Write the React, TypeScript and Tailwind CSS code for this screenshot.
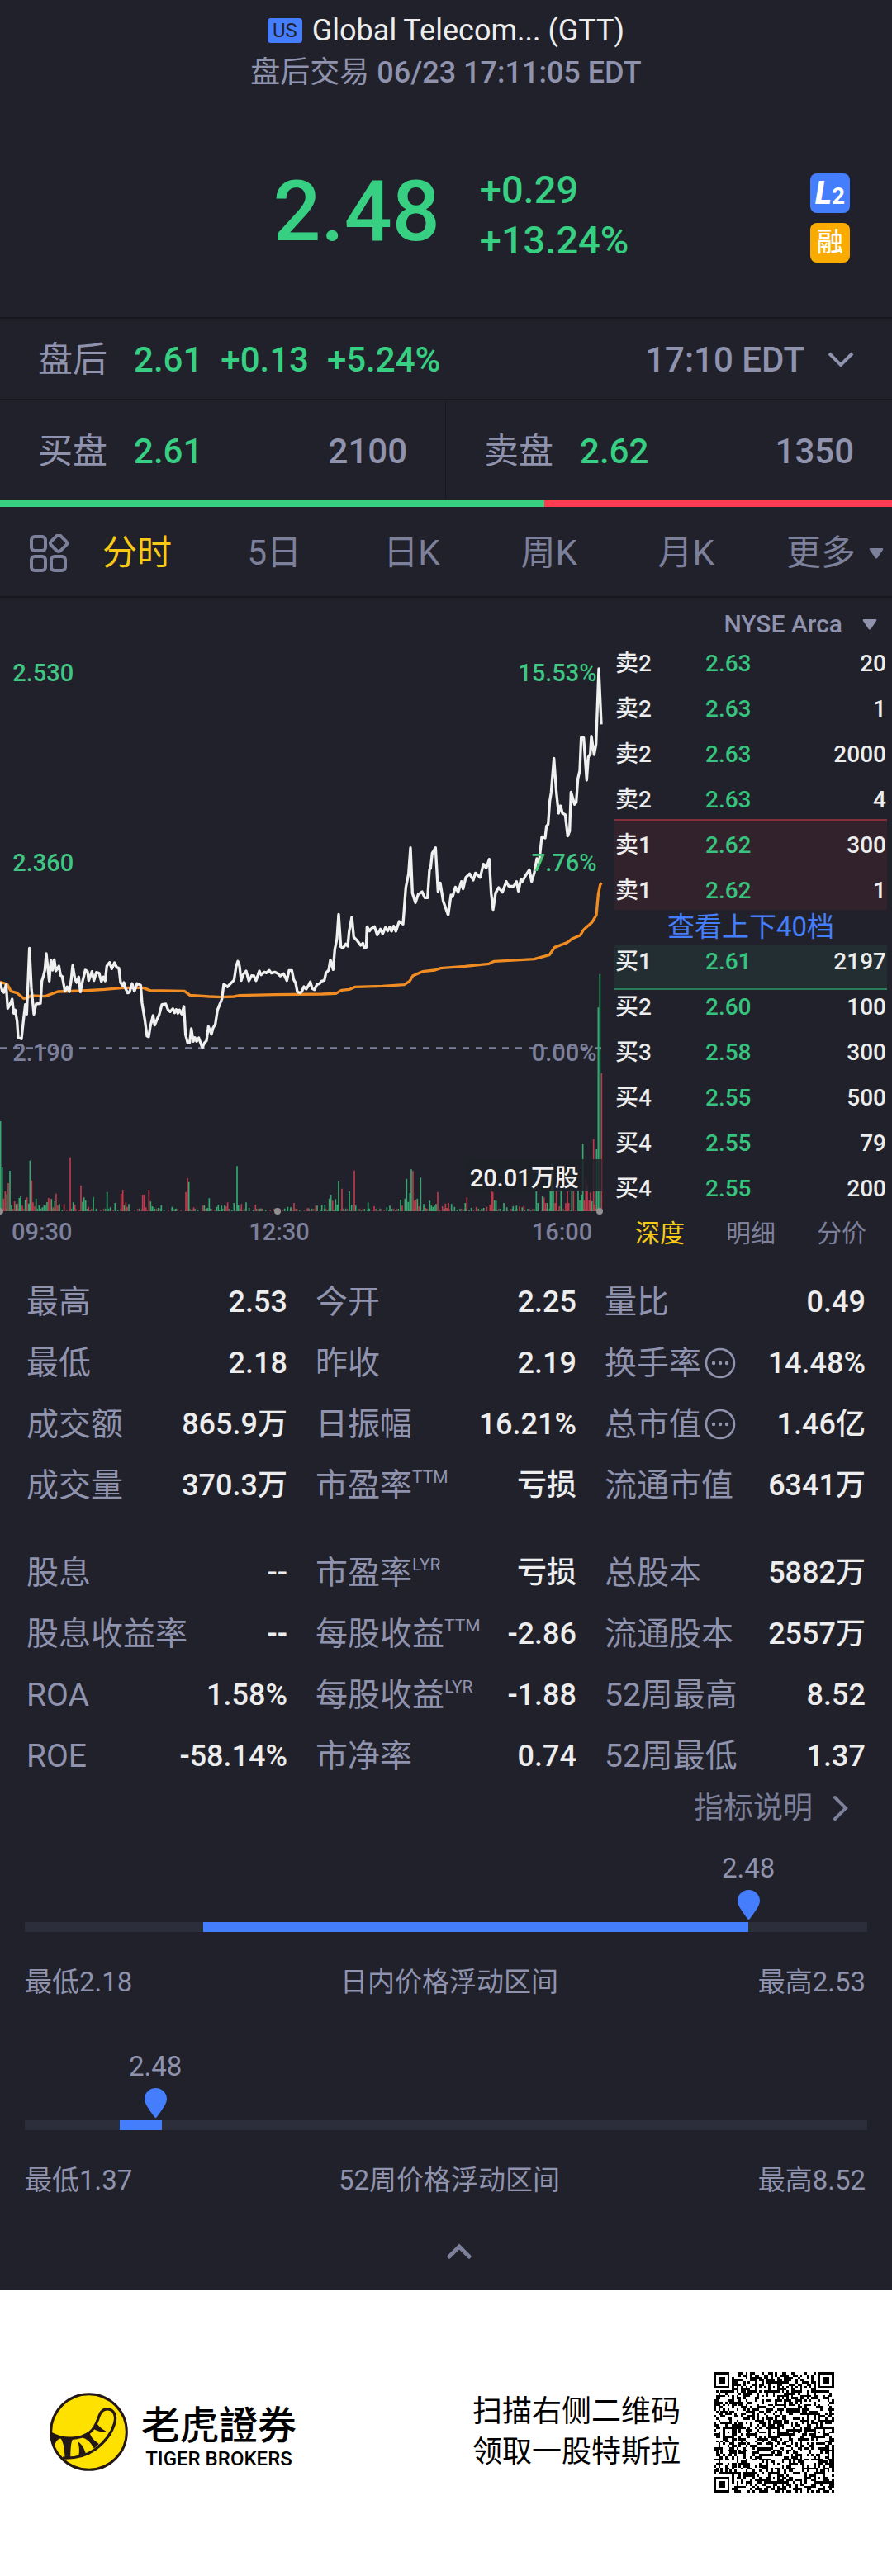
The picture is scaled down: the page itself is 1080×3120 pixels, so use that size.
import React, { useState } from "react";

interface Level {
  side: string;
  price: string;
  size: string;
}

interface Stat {
  label: string;
  value: string;
  sup?: string;
  info?: boolean;
}

const asks: Level[] = [
  { side: "卖2", price: "2.63", size: "20" },
  { side: "卖2", price: "2.63", size: "1" },
  { side: "卖2", price: "2.63", size: "2000" },
  { side: "卖2", price: "2.63", size: "4" },
  { side: "卖1", price: "2.62", size: "300" },
  { side: "卖1", price: "2.62", size: "1" },
];

const bids: Level[] = [
  { side: "买1", price: "2.61", size: "2197" },
  { side: "买2", price: "2.60", size: "100" },
  { side: "买3", price: "2.58", size: "300" },
  { side: "买4", price: "2.55", size: "500" },
  { side: "买4", price: "2.55", size: "79" },
  { side: "买4", price: "2.55", size: "200" },
];

const quoteStats: Stat[] = [
  { label: "最高", value: "2.53" },
  { label: "今开", value: "2.25" },
  { label: "量比", value: "0.49" },
  { label: "最低", value: "2.18" },
  { label: "昨收", value: "2.19" },
  { label: "换手率", value: "14.48%", info: true },
  { label: "成交额", value: "865.9万" },
  { label: "日振幅", value: "16.21%" },
  { label: "总市值", value: "1.46亿", info: true },
  { label: "成交量", value: "370.3万" },
  { label: "市盈率", value: "亏损", sup: "TTM" },
  { label: "流通市值", value: "6341万" },
];

const companyStats: Stat[] = [
  { label: "股息", value: "--" },
  { label: "市盈率", value: "亏损", sup: "LYR" },
  { label: "总股本", value: "5882万" },
  { label: "股息收益率", value: "--" },
  { label: "每股收益", value: "-2.86", sup: "TTM" },
  { label: "流通股本", value: "2557万" },
  { label: "ROA", value: "1.58%" },
  { label: "每股收益", value: "-1.88", sup: "LYR" },
  { label: "52周最高", value: "8.52" },
  { label: "ROE", value: "-58.14%" },
  { label: "市净率", value: "0.74" },
  { label: "52周最低", value: "1.37" },
];

// Chart units: three per pixel, y grows downwards, volume baseline at 1041
const priceLine =
  "0,208 8,240 14,246 22,218 28,304 36,290 44,270 50,322 55,310 62,350 66,410 78,415 86,340 92,290 97,325 107,85 114,230 123,325 131,288 147,286 152,205 158,185 163,165 168,105 179,205 185,128 191,165 197,127 203,168 214,150 220,184 226,188 236,242 244,226 252,243 258,205 264,148 272,195 278,210 286,190 292,244 300,205 310,165 318,170 322,203 334,170 341,203 350,173 360,176 368,206 376,190 382,204 388,150 398,137 406,160 416,138 424,155 432,158 438,210 446,222 450,210 456,232 464,248 470,246 480,214 488,242 498,214 511,220 516,285 526,345 534,405 540,407 546,370 556,330 562,365 570,345 578,328 588,290 602,288 610,308 618,316 628,305 634,320 640,308 646,322 652,310 660,325 668,297 674,400 682,430 689,428 695,378 702,424 708,410 714,424 722,411 728,428 735,447 742,430 750,422 757,370 768,398 774,375 782,362 790,310 798,290 806,270 813,215 826,226 838,213 850,202 858,150 864,133 870,150 876,203 884,180 894,168 904,204 914,185 922,186 930,203 942,168 948,182 960,172 968,175 978,166 986,176 998,172 1010,178 1018,186 1030,178 1042,203 1050,166 1060,166 1067,200 1074,212 1080,244 1090,248 1096,243 1104,225 1112,234 1120,222 1127,208 1134,232 1142,236 1152,216 1160,215 1168,205 1178,202 1184,175 1194,165 1200,128 1210,163 1216,90 1224,50 1230,-38 1238,80 1246,85 1256,70 1263,78 1268,25 1278,-28 1285,45 1295,55 1310,75 1318,67 1322,82 1330,82 1333,7 1342,23 1350,13 1360,7 1370,37 1382,16 1390,33 1400,10 1408,23 1416,8 1422,24 1430,5 1438,24 1450,-12 1464,-2 1474,-135 1484,-185 1491,-280 1498,-115 1509,-80 1519,-110 1533,-120 1543,-98 1553,-98 1560,-200 1564,-205 1570,-260 1582,-280 1591,-120 1599,-152 1610,-85 1628,-35 1638,-108 1644,-102 1654,-137 1664,-118 1676,-157 1682,-130 1692,-172 1706,-185 1719,-162 1727,-188 1744,-172 1756,-220 1766,-205 1777,-238 1784,-115 1791,-55 1800,-115 1811,-135 1825,-118 1839,-157 1848,-140 1866,-140 1876,-157 1883,-122 1892,-165 1898,-158 1910,-180 1923,-200 1931,-157 1941,-190 1950,-240 1958,-225 1968,-320 1980,-315 1985,-358 1991,-365 1997,-450 2002,-480 2012,-605 2021,-480 2029,-405 2036,-432 2043,-405 2053,-400 2062,-322 2069,-340 2074,-482 2087,-437 2093,-445 2099,-530 2106,-560 2111,-680 2120,-680 2131,-525 2137,-610 2144,-620 2148,-685 2158,-618 2165,-655 2175,-930 2184,-728";

const averageLine =
  "0,208 26,216 40,242 62,248 86,268 100,266 112,258 165,260 210,243 300,240 380,235 450,229 520,229 545,239 670,241 690,256 760,261 805,263 850,261 870,257 1000,254 1170,252 1220,250 1240,238 1270,235 1290,226 1390,223 1468,218 1488,205 1500,185 1535,170 1580,165 1600,158 1690,151 1776,142 1795,133 1940,125 1995,110 2015,82 2060,65 2080,50 2108,38 2120,18 2150,-8 2166,-35 2173,-110 2180,-145 2185,-152";

// [x, height] of the one-minute volume bars
const upVolume = [
  [2, 327], [8, 160], [25, 62], [36, 147], [42, 22], [58, 26], [70, 48], [75, 55], [92, 42], [104, 28],
  [109, 184], [131, 46], [142, 22], [154, 14], [160, 22], [165, 20], [171, 33], [187, 44], [199, 36], [216, 26],
  [266, 32], [300, 34], [305, 50], [311, 40], [339, 52], [350, 10], [389, 70], [401, 14], [418, 30], [451, 22],
  [468, 26], [547, 35], [553, 18], [559, 16], [575, 12], [586, 22], [625, 16], [637, 8], [686, 106], [742, 22],
  [754, 12], [760, 47], [787, 16], [793, 24], [805, 20], [816, 22], [850, 30], [861, 164], [866, 22], [894, 32],
  [905, 12], [945, 10], [1034, 10], [1045, 16], [1056, 14], [1152, 20], [1169, 22], [1180, 24], [1196, 46], [1202, 60],
  [1219, 44], [1225, 24], [1230, 108], [1269, 72], [1277, 24], [1292, 20], [1337, 32], [1342, 10], [1405, 14], [1416, 20],
  [1455, 42], [1471, 46], [1477, 118], [1483, 34], [1489, 66], [1494, 152], [1516, 46], [1528, 122], [1539, 26], [1561, 38],
  [1567, 20], [1573, 16], [1578, 20], [1584, 26], [1640, 26], [1651, 16], [1690, 30], [1712, 12], [1757, 12], [1796, 40],
  [1802, 38], [1830, 30], [1841, 14], [1864, 18], [1876, 20], [1897, 14], [1948, 72], [1954, 30], [1970, 56], [1988, 30],
  [1999, 76], [2004, 175], [2010, 76], [2038, 78], [2077, 165], [2100, 78], [2106, 40], [2112, 60], [2117, 245], [2150, 36],
  [2167, 225], [2173, 740], [2179, 862],
];

const downVolume = [
  [13, 46], [19, 72], [30, 102], [47, 8], [53, 36], [64, 28], [81, 20], [98, 50], [115, 112], [120, 32],
  [126, 18], [176, 48], [182, 46], [193, 14], [204, 64], [210, 22], [233, 26], [255, 196], [272, 24], [294, 94],
  [322, 16], [440, 64], [446, 78], [457, 32], [462, 16], [518, 60], [524, 60], [530, 14], [541, 78], [675, 70],
  [681, 120], [704, 14], [737, 20], [821, 18], [827, 32], [877, 26], [928, 24], [950, 10], [1068, 30], [1079, 8],
  [1118, 12], [1147, 20], [1208, 38], [1242, 82], [1287, 148], [1359, 18], [1461, 20], [1500, 146], [1506, 38], [1511, 42],
  [1522, 18], [1545, 12], [1590, 70], [1607, 18], [1618, 28], [1623, 12], [1629, 30], [1696, 50], [1730, 16], [1768, 16],
  [1780, 24], [1785, 110], [1790, 70], [1887, 18], [1903, 20], [1976, 50], [1982, 30], [2016, 30], [2021, 72], [2032, 18],
  [2055, 30], [2061, 72], [2066, 30], [2083, 72], [2122, 40], [2128, 120], [2133, 95], [2140, 40], [2145, 68], [2156, 262],
  [2161, 24], [2185, 502],
];

const bars = (data: number[][]) =>
  data.map(([x, h]) => `M${x} 1041v${-h}`).join("");

// thin trades between the larger bars
const minorBars = (offset: number) => {
  let d = "";
  for (let i = offset; i < 389; i += 2) {
    const h = (i * i * 7 + i * 13) % 11;
    if (h > 2) d += `M${Math.round(i * 5.6) + 2} 1041v${-h}`;
  }
  return d;
};

function Chart() {
  return (
    <svg viewBox="0 -1188 2190 2388" className="block w-full h-auto" role="img" aria-label="分时">
      <path d="M0 449H2184" stroke="#7d809a" strokeWidth="8" strokeDasharray="24 24" />
      <g strokeWidth="5" fill="none">
        <path d={minorBars(0)} stroke="#2f9466" />
        <path d={minorBars(1)} stroke="#8c3345" />
        <path d={bars(upVolume)} stroke="#35a871" />
        <path d={bars(downVolume)} stroke="#bd3a4c" />
      </g>
      <g fill="#909090">
        <circle cx="0" cy="1041" r="12" />
        <circle cx="1008" cy="1041" r="12" />
        <circle cx="2178" cy="1041" r="12" />
      </g>
      <polyline points={averageLine} fill="none" stroke="#f08c22" strokeWidth="10" strokeLinejoin="round" />
      <polyline points={priceLine} fill="none" stroke="#f0f0f0" strokeWidth="10" strokeLinejoin="round" />
      <rect x="1692" y="852" width="494" height="117" fill="#1f2129" fillOpacity="0.85" />
      <g fontSize="87" fontWeight="500">
        <g fill="#3fc683">
          <text x="46" y="-885">2.530</text>
          <text x="2168" y="-885" textAnchor="end">15.53%</text>
          <text x="46" y="-195">2.360</text>
          <text x="2168" y="-195" textAnchor="end">7.76%</text>
        </g>
        <g fill="#7d809a">
          <text x="46" y="495">2.190</text>
          <text x="2168" y="495" textAnchor="end">0.00%</text>
          <text x="42" y="1145">09:30</text>
          <text x="1014" y="1145" textAnchor="middle">12:30</text>
          <text x="2152" y="1145" textAnchor="end">16:00</text>
        </g>
        <text x="2102" y="951" textAnchor="end" fill="#f0f0f0">20.01万股</text>
      </g>
    </svg>
  );
}

function Triangle() {
  return (
    <svg viewBox="0 0 18 13" className="w-[18px] h-[13px] shrink-0" fill="currentColor">
      <path d="M2 0h14q2 0 1 2l-6 9q-2 3-4 0L1 2Q0 0 2 0z" />
    </svg>
  );
}

function LevelRow({ level, className }: { level: Level; className: string }) {
  return (
    <tr className={className}>
      <td className="w-[110px] p-0 pl-px">{level.side}</td>
      <td className="p-0 text-[#37c47e]">{level.price}</td>
      <td className="p-0 pr-px text-right">{level.size}</td>
    </tr>
  );
}

function OrderBook() {
  const [mode, setMode] = useState("深度");

  return (
    <section className="w-[330px] shrink-0 text-[28px] leading-none text-[#ededed]">
      <label className="flex h-12 items-center justify-end gap-6 pr-3 pt-4 text-[30px] text-[#8f93ae]">
        <select aria-label="行情来源" className="appearance-none bg-transparent text-right font-medium leading-9">
          <option>NYSE Arca</option>
        </select>
        <Triangle />
      </label>

      <table className="w-full table-fixed border-collapse font-medium">
        <tbody>
          {asks.map((level, index) => (
            <LevelRow
              key={index}
              level={level}
              className={
                "h-[55px] [&>td]:pt-2 " +
                (level.side === "卖1" ? "bg-[#32222c] " : "") +
                (index === 4 ? "shadow-[inset_0_2px_0_#84303c]" : "")
              }
            />
          ))}
        </tbody>
      </table>

      <a href="#depth" className="block text-center text-[33px] leading-[42px] text-[#457efd]">
        查看上下40档
      </a>

      <table className="w-full table-fixed border-collapse font-medium">
        <tbody>
          {bids.map((level, index) => (
            <LevelRow
              key={index}
              level={level}
              className={
                "h-[55px] [&>td]:pb-3.5 " +
                (index === 0 ? "bg-[#232e33] shadow-[inset_0_-2px_0_#2a7d57]" : "")
              }
            />
          ))}
        </tbody>
      </table>

      <div className="grid grid-cols-3">
        {["深度", "明细", "分价"].map((name) => (
          <button
            key={name}
            onClick={() => setMode(name)}
            className={
              "h-10 text-[30px] leading-10 " +
              (mode === name ? "text-[#f7cb15]" : "text-[#7d809a]")
            }
          >
            {name}
          </button>
        ))}
      </div>
    </section>
  );
}

function Periods() {
  const [period, setPeriod] = useState("分时");

  return (
    <nav className="flex h-[110px] items-center border-b-2 border-[#17171f] pl-[35px] pt-1 text-[42px] leading-none text-[#7d809a]">
      <button aria-label="指标" className="w-12 shrink-0">
        <svg viewBox="0 0 48 46" className="w-12" fill="none" stroke="currentColor" strokeWidth="4">
          <rect x="3" y="3" width="17" height="17" rx="4" />
          <rect x="3" y="27" width="17" height="17" rx="4" />
          <rect x="27" y="27" width="17" height="17" rx="4" />
          <rect x="28" y="3" width="16" height="16" rx="3" transform="rotate(45 36 11)" />
        </svg>
      </button>
      <div className="grid flex-1 grid-cols-6">
        {["分时", "5日", "日K", "周K", "月K"].map((name) => (
          <button
            key={name}
            onClick={() => setPeriod(name)}
            className={period === name ? "text-[#f7cb15]" : ""}
          >
            {name}
          </button>
        ))}
        <button aria-haspopup="menu" className="flex items-center justify-end gap-4 pr-2.5">
          更多
          <Triangle />
        </button>
      </div>
    </nav>
  );
}

function StatGrid({ stats }: { stats: Stat[] }) {
  return (
    <dl className="grid grid-cols-3 gap-x-[34px]">
      {stats.map((stat, index) => (
        <div key={index} className="flex h-[74px] items-center justify-between whitespace-nowrap">
          <dt className="flex items-center text-[39px] leading-none text-[#8f93ae]">
            <span>
              {stat.label}
              {stat.sup && <sup className="-top-4 text-[21px]">{stat.sup}</sup>}
            </span>
            {stat.info && (
              <svg viewBox="0 0 38 38" className="ml-1 w-[38px]" fill="none" stroke="currentColor" strokeWidth="2.6">
                <circle cx="19" cy="19" r="17" />
                <path d="M11 19h.1M19 19h.1M27 19h.1" strokeWidth="4.4" strokeLinecap="round" />
              </svg>
            )}
          </dt>
          <dd className="text-[36px] font-medium leading-none text-[#ededed]">{stat.value}</dd>
        </div>
      ))}
    </dl>
  );
}

interface RangeProps {
  title: string;
  low: string;
  high: string;
  from: number;
  to: number;
  marker: number;
}

function PriceRange({ title, low, high, from, to, marker }: RangeProps) {
  return (
    <section className="px-[30px] text-[33px] leading-none text-[#8f93ae]">
      <div className="relative h-[82px]">
        <div
          className="absolute flex w-20 -translate-x-1/2 flex-col items-center gap-2.5"
          style={{ left: `${marker}%` }}
        >
          <span>2.48</span>
          <svg viewBox="0 0 27 36" className="w-[27px]" fill="#457efd">
            <path d="M13.500 0C21 0 27 6 27 13c0 6-5 12-12 22q-1.500 2-3 0C5 25 0 19 0 13 0 6 6 0 13.500 0z" />
          </svg>
        </div>
      </div>
      <div className="h-3 bg-[#2d2e3b]">
        <div className="h-3 bg-[#457efd]" style={{ marginLeft: `${from}%`, width: `${to - from}%` }} />
      </div>
      <div className="grid grid-cols-[1fr_auto_1fr] pt-11">
        <span>最低{low}</span>
        <span className="pl-2">{title}</span>
        <span className="pr-0.5 text-right">最高{high}</span>
      </div>
    </section>
  );
}

function Logo() {
  return (
    <svg viewBox="60 57 286 286" className="w-[95px] shrink-0">
      <circle cx="203" cy="200" r="138" fill="#ffe100" stroke="#231815" strokeWidth="9" />
      <path
        d="M66 206C110 230 170 230 208 200C245 170 232 120 268 117C296 116 304 142 297 168C286 208 258 240 226 264C192 288 152 297 108 295"
        fill="none"
        stroke="#231815"
        strokeWidth="10"
      />
      <g fill="#231815">
        <path d="M64 202L104 222Q84 226 78 250Q66 230 64 202z" />
        <path d="M100 222L148 222Q136 232 136 292L116 294Q114 240 100 222z" />
        <path d="M162 234Q182 246 192 278L166 288Q172 258 162 234z" />
        <path d="M178 220L206 200Q208 222 240 244L222 260Q204 226 178 220z" />
        <path d="M218 188L232 168Q240 184 266 198Q248 204 218 188z" />
      </g>
    </svg>
  );
}

const QR_SIZE = 53;

function qrModule(x: number, y: number) {
  const last = QR_SIZE - 7;
  for (const [fx, fy] of [[0, 0], [last, 0], [0, last]]) {
    const ring = Math.max(Math.abs(x - fx - 3), Math.abs(y - fy - 3));
    if (ring <= 4) return ring !== 2 && ring !== 4;
  }
  for (const ax of [6, 26, 46]) {
    for (const ay of [6, 26, 46]) {
      const ring = Math.max(Math.abs(x - ax), Math.abs(y - ay));
      if (ring <= 2) return ring !== 1;
    }
  }
  if (x === 6 || y === 6) return (x + y) % 2 === 0;
  let n = (x * 374761393 + y * 668265263) | 0;
  n = Math.imul(n ^ (n >>> 13), 1274126177);
  return ((n ^ (n >>> 16)) & 1) === 1;
}

function QrCode() {
  let d = "";
  for (let y = 0; y < QR_SIZE; y++) {
    for (let x = 0; x < QR_SIZE; x++) {
      if (qrModule(x, y)) d += `M${x} ${y}h1v1h-1z`;
    }
  }
  return (
    <svg viewBox="0 0 53 53" className="w-[146px] shrink-0" shapeRendering="crispEdges" role="img" aria-label="二维码">
      <path d={d} />
    </svg>
  );
}

export default function App() {
  return (
    <div className="bg-white font-['Roboto','Noto_Sans_CJK_SC',sans-serif]">
      <main className="bg-[#21212b] text-[#8f93ae]">
        <header className="pt-3 text-center">
          <h1 className="flex items-center justify-center gap-3 text-[36px] leading-[50px] text-[#ededed]">
            <span className="rounded bg-[#457efd] px-1.5 text-[24px] leading-[30px] text-[#21212b]">US</span>
            Global Telecom... (GTT)
          </h1>
          <p className="text-[36px] leading-[52px]">
            盘后交易 <span className="font-medium">06/23 17:11:05 EDT</span>
          </p>
        </header>

        <section className="grid grid-cols-[1fr_auto_1fr] items-center pb-[66px] pt-20 font-medium text-[#37cf82]">
          <div />
          <div className="flex h-[124px] items-center gap-12 pl-3">
            <strong className="text-[102px] font-medium leading-none">2.48</strong>
            <div className="pt-2 text-[47px] leading-[61px]">
              <p>+0.29</p>
              <p>+13.24%</p>
            </div>
          </div>
          <div className="flex flex-col items-end gap-3 self-end pr-[51px] text-white">
            <span className="flex h-12 w-12 items-center justify-center rounded-lg bg-[#457efd] leading-none">
              <span className="text-[38px] font-black italic">L</span>
              <span className="pt-2 text-[28px] font-bold">2</span>
            </span>
            <span className="h-12 w-12 rounded-lg bg-[#f9ab00] text-center text-[32px] leading-[46px]">融</span>
          </div>
        </section>

        <section className="flex h-[101px] items-center gap-[22px] border-y-2 border-[#17171f] px-[46px] pt-0.5 text-[42px] leading-none">
          <span className="pr-2.5">盘后</span>
          <span className="font-medium text-[#37cf82]">2.61</span>
          <span className="font-medium text-[#37cf82]">+0.13</span>
          <span className="font-medium text-[#37cf82]">+5.24%</span>
          <button className="ml-auto flex items-center gap-7 font-medium">
            17:10 EDT
            <svg viewBox="0 0 32 20" className="w-8" fill="none" stroke="currentColor" strokeWidth="4">
              <path d="M2 2l14 14L30 2" />
            </svg>
          </button>
        </section>

        <section className="grid h-[120px] grid-cols-2 text-[42px] leading-none">
          <div className="flex items-center gap-8 border-r border-[#17171f] px-[46px] pt-1">
            <span>买盘</span>
            <span className="font-medium text-[#37cf82]">2.61</span>
            <span className="ml-auto font-medium">2100</span>
          </div>
          <div className="flex items-center gap-8 px-[46px] pt-1">
            <span>卖盘</span>
            <span className="font-medium text-[#37cf82]">2.62</span>
            <span className="ml-auto font-medium">1350</span>
          </div>
        </section>
        <div className="h-[9px] bg-[#ff3b50]">
          <div className="h-full w-[61%] bg-[#37cf82]" />
        </div>

        <Periods />

        <div className="flex gap-3.5 pr-1.5">
          <div className="min-w-0 flex-1">
            <Chart />
          </div>
          <OrderBook />
        </div>

        <div className="flex flex-col gap-8 px-8 pt-5">
          <StatGrid stats={quoteStats} />
          <StatGrid stats={companyStats} />
        </div>

        <div className="flex justify-end pr-[52px]">
          <a href="#help" className="flex items-center gap-6 text-[36px] leading-[52px] text-[#7d809a]">
            指标说明
            <svg viewBox="0 0 20 32" className="w-5" fill="none" stroke="currentColor" strokeWidth="4" strokeLinecap="round">
              <path d="M3 3l13 13L3 29" />
            </svg>
          </a>
        </div>

        <div className="flex flex-col gap-[69px] pt-[30px]">
          <PriceRange title="日内价格浮动区间" low="2.18" high="2.53" from={21.2} to={85.9} marker={85.9} />
          <PriceRange title="52周价格浮动区间" low="1.37" high="8.52" from={11.3} to={16.3} marker={15.5} />
        </div>

        <button aria-label="收起" className="flex w-full justify-center pb-9 pl-8 pt-[60px]">
          <svg viewBox="0 0 32 20" className="w-8" fill="none" stroke="#7d809a" strokeWidth="5" strokeLinecap="round">
            <path d="M4 16L16 4l12 12" />
          </svg>
        </button>
      </main>

      <footer className="flex h-[345px] items-center pl-[60px] pr-[70px] text-black">
        <Logo />
        <div className="pl-4 text-center">
          <p className="font-['Noto_Sans_CJK_TC',sans-serif] text-[47px] font-medium leading-[64px]">老虎證券</p>
          <p className="text-[24px] font-medium leading-6">TIGER BROKERS</p>
        </div>
        <p className="ml-auto pr-10 text-[36px] leading-[49px]">
          扫描右侧二维码
          <br />
          领取一股特斯拉
        </p>
        <QrCode />
      </footer>
    </div>
  );
}
